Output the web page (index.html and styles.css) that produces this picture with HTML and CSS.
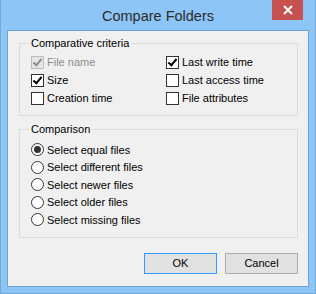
FILE: index.html
```html
<!DOCTYPE html>
<html lang="en">

<head>
    <meta charset="UTF-8">
    <title>Compare Folders</title>
    <link rel="stylesheet" href="styles.css">
</head>

<body>
    <div class="window">
        <div class="titleBar">
            <span class="title">Compare Folders</span>
            <span class="closeBtn">
                <svg width="10" height="10" viewBox="0 0 10 10">
                    <path d="M1 1L9 9M9 1L1 9" stroke="#fff" stroke-width="2"/>
                </svg>
            </span>
        </div>

        <div class="client">
            <fieldset class="group criteria">
                <legend>Comparative criteria</legend>
                <div class="grid">
                    <label class="opt disabled"><span class="box checked"></span>File name</label>
                    <label class="opt"><span class="box checked"></span>Last write time</label>
                    <label class="opt"><span class="box checked"></span>Size</label>
                    <label class="opt"><span class="box"></span>Last access time</label>
                    <label class="opt"><span class="box"></span>Creation time</label>
                    <label class="opt"><span class="box"></span>File attributes</label>
                </div>
            </fieldset>

            <fieldset class="group comparison">
                <legend>Comparison</legend>
                <div class="list">
                    <label class="opt"><span class="radio selected"></span>Select equal files</label>
                    <label class="opt"><span class="radio"></span>Select different files</label>
                    <label class="opt"><span class="radio"></span>Select newer files</label>
                    <label class="opt"><span class="radio"></span>Select older files</label>
                    <label class="opt"><span class="radio"></span>Select missing files</label>
                </div>
            </fieldset>

            <div class="buttons">
                <span class="btn default">OK</span>
                <span class="btn">Cancel</span>
            </div>
        </div>
    </div>
</body>

</html>
```

FILE: styles.css
```css
html,
body {
    margin: 0;
    padding: 0;
}

body {
    font-family: "Liberation Sans", Arial, sans-serif;
    font-size: 11px;
    color: #000;
}

.window {
    width: 316px;
    height: 294px;
    box-sizing: border-box;
    background-color: #8cc5f6;
    border: 1px solid #72a9d9;
    border-top: 0;
    padding: 0 6px 6px 6px;
    display: flex;
    flex-direction: column;
}

.titleBar {
    height: 30px;
    display: flex;
    align-items: center;
    justify-content: center;
    position: relative;
}

.title {
    font-size: 14.5px;
    color: #2b2b2b;
    margin-top: 1px;
}

.closeBtn {
    position: absolute;
    top: 0;
    right: 6px;
    width: 31px;
    height: 20px;
    background-color: #c75050;
    display: flex;
    align-items: center;
    justify-content: center;
}

.client {
    flex: 1;
    background-color: #f0f0f0;
    border: 1px solid #6fa3d2;
    padding: 0 10px 0 11px;
    display: flex;
    flex-direction: column;
}

.group {
    margin: 0;
    border: 1px solid #dcdcdc;
    padding: 0 0 8px 11px;
}

.group legend {
    padding: 0 2px;
    margin-left: -2px;
    line-height: 13px;
}

.criteria {
    margin-top: 6px;
}

.comparison {
    margin-top: 7px;
}

.grid {
    display: grid;
    grid-template-columns: 135px 1fr;
    grid-auto-rows: 18px;
    margin-top: 3px;
}

.list {
    display: grid;
    grid-auto-rows: 17.5px;
    margin-top: 5px;
}

.opt {
    display: flex;
    align-items: center;
}

.opt.disabled {
    color: #8d8d8d;
}

.box,
.radio {
    width: 13px;
    height: 13px;
    box-sizing: border-box;
    border: 1px solid #333;
    background-color: #fff;
    margin-right: 3px;
    flex-shrink: 0;
    position: relative;
}

.box.checked::after {
    content: "";
    position: absolute;
    left: 3px;
    top: 0px;
    width: 3px;
    height: 7px;
    border: solid #000;
    border-width: 0 2px 2px 0;
    transform: rotate(40deg);
}

.disabled .box {
    border-color: #bcbcbc;
    background-color: #e6e6e6;
}

.disabled .box.checked::after {
    border-color: #8d8d8d;
}

.radio {
    border-radius: 50%;
}

.radio.selected::after {
    content: "";
    position: absolute;
    left: 2px;
    top: 2px;
    width: 7px;
    height: 7px;
    border-radius: 50%;
    background-color: #333;
}

.buttons {
    display: flex;
    justify-content: flex-end;
    gap: 8px;
    margin-top: 15px;
}

.btn {
    width: 73px;
    height: 21px;
    box-sizing: border-box;
    border: 1px solid #adadad;
    background-color: #e1e1e1;
    display: flex;
    align-items: center;
    justify-content: center;
}

.btn.default {
    border-color: #3399ff;
}
```
